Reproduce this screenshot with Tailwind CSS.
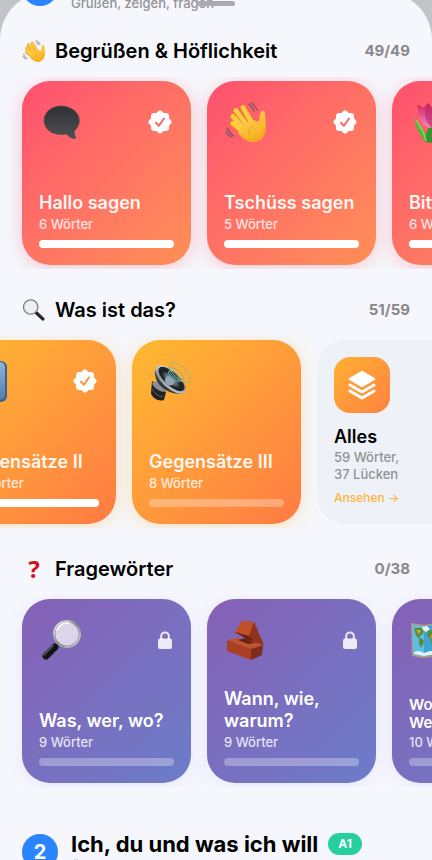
<!DOCTYPE html>
<html lang="de">

<head>
    <meta charset="UTF-8">
    <meta name="viewport" content="width=device-width, initial-scale=1.0">
    <title>Lektionen</title>
    <script src="https://cdn.jsdelivr.net/npm/@tailwindcss/browser@4"></script>
</head>

<body class="bg-[#c3c4c9] font-['Inter',sans-serif] text-black">
    <!-- Shared icons -->
    <svg class="absolute w-0 h-0" aria-hidden="true">
        <defs>
            <linearGradient id="skin" x1="0" y1="0" x2="0.6" y2="1">
                <stop offset="0" stop-color="#ffd75a" />
                <stop offset="1" stop-color="#f9ae1f" />
            </linearGradient>
            <linearGradient id="balloon" x1="0" y1="0" x2="0" y2="1">
                <stop offset="0" stop-color="#303032" />
                <stop offset="1" stop-color="#505052" />
            </linearGradient>
            <linearGradient id="petal" x1="0" y1="0" x2="0" y2="1">
                <stop offset="0" stop-color="#d51f5e" />
                <stop offset="1" stop-color="#f08cc0" />
            </linearGradient>
            <linearGradient id="tile" x1="0" y1="0" x2="0" y2="1">
                <stop offset="0" stop-color="#8fb4dc" />
                <stop offset="1" stop-color="#4f7fae" />
            </linearGradient>
            <linearGradient id="metal" x1="0" y1="0" x2="1" y2="1">
                <stop offset="0" stop-color="#f2f3f5" />
                <stop offset="0.5" stop-color="#8d9299" />
                <stop offset="1" stop-color="#d5d8dc" />
            </linearGradient>
            <radialGradient id="cone" cx="0.5" cy="0.55" r="0.6">
                <stop offset="0" stop-color="#b5c0cd" />
                <stop offset="0.35" stop-color="#5d666f" />
                <stop offset="0.6" stop-color="#1b1e22" />
                <stop offset="1" stop-color="#2d3237" />
            </radialGradient>
        </defs>
        <symbol id="wave" viewBox="0 0 44 44">
            <g fill="none" stroke-linecap="round">
                <g stroke="#dd8f16" stroke-width="6">
                    <path d="M29 25 19 8M25 28 12 11M22 31 9 17M22 34 9 24" />
                </g>
                <g stroke="#ffcb45" stroke-width="4.6">
                    <path d="M29 25 19 7.500M25 28 12 10.500M22 31 9 16.500M22 34 9 23.500" />
                </g>
            </g>
            <path d="M30 20c2 1 4 2 5 1 1-3 0-6 2-9 1-2 4-1.500 4 1 0 4 1 9 1 14 0 8-5 15-13 15-6 0-11-4-15-9l6-9z" fill="url(#skin)" />
            <path d="M29 25c-3 2-5 6-4 10" fill="none" stroke="#e39a1b" stroke-width="0.800" />
            <path d="M17 34c4 5 10 7 15 5 5-1 8-6 9-11" fill="none" stroke="#ea9915" stroke-width="1" opacity=".6" />
            <path d="M25 4c2 2 4 4 5 7M28 3c2 2 4 4 5 7M3 28c1 3 3 5 6 8M2 32c1 2 3 4 5 5" fill="none" stroke="#6d5a62" stroke-width="1.300" stroke-linecap="round" />
        </symbol>
        <symbol id="speech" viewBox="0 0 44 44">
            <path d="M22 6C12 6 5 12.500 5 20.500S12 34.500 22 34.500c2.500 0 4 0 5.500-.500 2 2.600 5 4.600 8.500 4.600.8 0 1-.8.6-1.400-1-2-1.300-4-1.200-6.200 3-3 5-6.500 5-10.500C40.400 12.500 32 6 22 6z" fill="url(#balloon)" stroke="#5a5052" stroke-width=".7" />
        </symbol>
        <symbol id="tulip" viewBox="0 0 44 44">
            <path d="M6 19c4 4 10 10 13 23h-3C12 36 6 28 6 19z" fill="#55b63c" />
            <path d="M16 42c0-7 2-12 5-17l3 1-1 17z" fill="#3a9431" />
            <path d="M7 20c4 6 8 12 10 21" fill="none" stroke="#b4e27d" stroke-width="1" />
            <path d="M23 28c9-1 9-12 12-22-5 0-8 2-10 5-2-4-4-5-6-8-2 3-4 3-5 5-2-2-4-3-6-3 3 8 0 21 15 23z" fill="url(#petal)" />
            <path d="M19 3c-4 7-5 17 4 25 5-8 3-18-4-25z" fill="#b52665" opacity=".6" />
            <path d="M38 18c-6 7-10 15-12 25h3c6-8 9-15 9-25z" fill="#55b63c" />
        </symbol>
        <symbol id="bluetile" viewBox="0 0 44 44">
            <rect x="1" y="2" width="42" height="41" rx="6" fill="#3f6185" />
            <rect x="2" y="3" width="39" height="38" rx="5" fill="url(#tile)" />
            <path d="M22 10v22M14 18l8-8 8 8" fill="none" stroke="#fff" stroke-width="4" />
        </symbol>
        <symbol id="speaker" viewBox="0 0 44 44">
            <path d="M3 22 17 33 15 41C10 43 3 39 2 34z" fill="#202326" />
            <path d="M3 24c1 4 6 8 12 9l2-3-9-8z" fill="#8a8f95" />
            <path d="M3 30c2 4 6 7 11 8" fill="none" stroke="#5c6268" stroke-width="1" />
            <path d="M6 11c-1 7 3 15 9 19 6 4 14 6 20 4z" fill="#34393e" />
            <ellipse cx="21.500" cy="20.500" rx="19" ry="8.500" transform="rotate(42 21.500 20.500)" fill="url(#metal)" />
            <ellipse cx="22.500" cy="20" rx="16.500" ry="6.800" transform="rotate(42 22.500 20)" fill="url(#cone)" />
            <ellipse cx="20.500" cy="22" rx="5" ry="4" transform="rotate(42 20.500 22)" fill="#98a5b5" />
            <g fill="none">
                <ellipse cx="25" cy="17" rx="7" ry="3" transform="rotate(43 25 17)" stroke="#43a9be" stroke-width="1" />
                <ellipse cx="27.500" cy="15.500" rx="9" ry="4" transform="rotate(43 27.500 15.500)" stroke="#5fb5af" stroke-width=".8" />
                <ellipse cx="31" cy="13.500" rx="13.500" ry="6" transform="rotate(43 31 13.500)" stroke="#a5b976" stroke-width="1" />
            </g>
        </symbol>
        <symbol id="magnifier" viewBox="0 0 44 44">
            <path d="M19 25 15 29" stroke="#a9adb3" stroke-width="4" />
            <path d="M16 29 7 38" stroke="#131616" stroke-width="7" stroke-linecap="round" />
            <path d="M14 27.500 5 37" stroke="#59605d" stroke-width="1.500" stroke-linecap="round" />
            <circle cx="28" cy="16" r="13" fill="#dcd5eb" stroke="#5f6576" stroke-width="2.500" />
            <circle cx="28" cy="16" r="13" fill="none" stroke="url(#metal)" stroke-width="2" />
            <path d="M18 12c2-5 7-8 12-7" fill="none" stroke="#fff" stroke-width="1.500" stroke-linecap="round" />
        </symbol>
        <symbol id="magnifier-left" viewBox="0 0 24 24">
            <path d="M14.500 15 21 21" stroke="#24272a" stroke-width="3.200" stroke-linecap="round" />
            <path d="M16.500 15 22 20" stroke="#777b80" stroke-width=".8" stroke-linecap="round" />
            <circle cx="8.700" cy="9" r="7.200" fill="#eef0f3" stroke="#6c7074" stroke-width="1.200" />
            <circle cx="8.700" cy="9" r="6.400" fill="none" stroke="#c5c8cc" stroke-width=".8" />
        </symbol>
        <symbol id="brick" viewBox="0 0 44 44">
            <path d="M11 15 18 3 29 4 40 27 31 26 22 19z" fill="#a33f20" />
            <path d="M11 14 18 3 30 4 25 18z" fill="#c04f2a" />
            <path d="M30 4 40 27 30 23 25 18z" fill="#8f351b" />
            <path d="M3 22 14 20 39 27 27 31z" fill="#c2542e" />
            <path d="M3 22 27 31 27 42 3 33z" fill="#a94022" />
            <path d="M27 31 39 27 38 37 27 42z" fill="#7e2e18" />
            <path d="M14 22 21 20 31 25 24 26z" fill="#6d2412" />
            <path d="M11 14 25 18 30 23 24 22z" fill="#6b2412" />
        </symbol>
        <symbol id="map" viewBox="0 0 44 44">
            <path d="M2 5 15 7 29 5 42 7 42 40 29 38 15 40 3 38z" fill="#b39b85" />
            <path d="M3.500 7 15 8.500 15 38.500 4.500 36.500z" fill="#5abfe9" />
            <path d="M15 8.500 29 6.500 29 36.500 15 38.500z" fill="#3ea4d6" />
            <path d="M29 6.500 40.500 8.500 40.500 38.500 29 36.500z" fill="#5abfe9" />
            <path d="M5 11c3-2 7-1 10 0l-1 5-3 2-1 3-3-4zM10 20c3 0 5 2 5 4l-3 6-2-4zM19 13l7-2 3 3-3 4 1 6-4 3-2-7-3-2z" fill="#5d8c32" />
            <path d="M7 12l5 0-2 4zM21 17l4 1-1 5z" fill="#c2b041" />
            <path d="M13 9l5-1 3 3-4 3-3-2zM5 34l5-1 5 2 6-2 8 1v2l-14 2-10-2z" fill="#e8f3f5" />
        </symbol>
        <symbol id="seal" viewBox="0 0 24 24">
            <rect x="3" y="3" width="18" height="18" rx="3" fill="#fff" />
            <rect x="3" y="3" width="18" height="18" rx="3" fill="#fff" transform="rotate(45 12 12)" />
            <path d="M8 12.800 10.800 15.800 16 8.500" fill="none" stroke="currentColor" stroke-width="2" stroke-linecap="round" stroke-linejoin="round" />
        </symbol>
        <symbol id="lock" viewBox="0 0 14 18">
            <path d="M3.200 9V5.200a3.800 3.800 0 0 1 7.600 0V9" fill="none" stroke="currentColor" stroke-width="2" />
            <rect x="0" y="7.500" width="14" height="10.500" rx="2" fill="currentColor" />
        </symbol>
    </svg>

    <main class="relative -mt-2 h-[calc(100vh+8px)] overflow-hidden rounded-t-[48px] bg-[#f6f7fc]">
        <div class="absolute top-[9px] left-1/2 z-10 h-[5px] w-[38px] -translate-x-1/2 rounded-full bg-[#aaabb2]"></div>

        <div class="-mt-6">
            <header class="flex items-start gap-[13px] px-[22px]">
                <span class="mt-0.5 flex size-9 shrink-0 items-center justify-center rounded-full bg-[#2a84ff] text-xl font-bold text-white">1</span>
                <div>
                    <h1 class="text-[22px] leading-6 font-bold">Hallo!</h1>
                    <p class="text-[13px] leading-[22px] font-medium text-[#929297]">Grüßen, zeigen, fragen</p>
                </div>
            </header>

            <div class="mt-[23px] flex flex-col gap-[27px]">
                <section>
                    <div class="flex items-center gap-[9px] px-[22px] leading-7">
                        <svg class="size-6"><use href="#wave" /></svg>
                        <h2 class="flex-1 text-xl leading-7 font-semibold">Begrüßen &amp; Höflichkeit</h2>
                        <span class="text-[15px] font-bold text-[#88888d]">49/49</span>
                    </div>
                    <div class="mt-3 flex gap-4 overflow-x-auto px-[22px] py-1 [scrollbar-width:none]">
                        <button class="flex h-[184px] w-[169px] shrink-0 flex-col rounded-[28px] bg-linear-135 from-[#ff4f6f] to-[#ff8f55] p-[17px] text-left text-white shadow-[0_3px_18px_#ff5a704d]">
                            <span class="flex h-12 w-full items-center justify-between">
                                <svg class="size-11"><use href="#speech" /></svg>
                                <svg class="mr-0.5 size-6 text-[#ff6a63]"><use href="#seal" /></svg>
                            </span>
                            <span class="mt-auto text-lg leading-[22px] font-semibold text-white/95">Hallo sagen</span>
                            <span class="text-[13px] leading-5 font-medium text-white/80">6 Wörter</span>
                            <span class="mt-1.5 h-2 w-full rounded-full bg-white"></span>
                        </button>
                        <button class="flex h-[184px] w-[169px] shrink-0 flex-col rounded-[28px] bg-linear-135 from-[#ff4f6f] to-[#ff8f55] p-[17px] text-left text-white shadow-[0_3px_18px_#ff5a704d]">
                            <span class="flex h-12 w-full items-center justify-between">
                                <svg class="size-11"><use href="#wave" /></svg>
                                <svg class="mr-0.5 size-6 text-[#ff6a63]"><use href="#seal" /></svg>
                            </span>
                            <span class="mt-auto text-lg leading-[22px] font-semibold text-white/95">Tschüss sagen</span>
                            <span class="text-[13px] leading-5 font-medium text-white/80">5 Wörter</span>
                            <span class="mt-1.5 h-2 w-full rounded-full bg-white"></span>
                        </button>
                        <button class="flex h-[184px] w-[169px] shrink-0 flex-col rounded-[28px] bg-linear-135 from-[#ff4f6f] to-[#ff8f55] p-[17px] text-left text-white shadow-[0_3px_18px_#ff5a704d]">
                            <span class="flex h-12 w-full items-center justify-between">
                                <svg class="size-11"><use href="#tulip" /></svg>
                                <svg class="mr-0.5 size-6 text-[#ff6a63]"><use href="#seal" /></svg>
                            </span>
                            <span class="mt-auto text-lg leading-[22px] font-semibold text-white/95">Bitte, danke</span>
                            <span class="text-[13px] leading-5 font-medium text-white/80">6 Wörter</span>
                            <span class="mt-1.5 h-2 w-full rounded-full bg-white"></span>
                        </button>
                    </div>
                </section>

                <section>
                    <div class="flex items-center gap-[9px] px-[22px] leading-7">
                        <svg class="size-6"><use href="#magnifier-left" /></svg>
                        <h2 class="flex-1 text-xl leading-7 font-semibold">Was ist das?</h2>
                        <span class="text-[15px] font-bold text-[#88888d]">51/59</span>
                    </div>
                    <div class="mt-3 flex gap-4 overflow-x-auto px-[22px] py-1 [scrollbar-width:none]">
                        <!-- first card is already swiped half out of view -->
                        <button class="-ml-[75px] flex h-[184px] w-[169px] shrink-0 flex-col rounded-[28px] bg-linear-135 from-[#ffb92f] to-[#ff7a42] p-[17px] text-left text-white shadow-[0_3px_18px_#ffb4304d]">
                            <span class="flex h-12 w-full items-center justify-between">
                                <svg class="size-11"><use href="#bluetile" /></svg>
                                <svg class="mr-0.5 size-6 text-[#ff963a]"><use href="#seal" /></svg>
                            </span>
                            <span class="mt-auto text-lg leading-[22px] font-semibold text-white/95">Gegensätze II</span>
                            <span class="text-[13px] leading-5 font-medium text-white/80">10 Wörter</span>
                            <span class="mt-1.5 h-2 w-full rounded-full bg-white"></span>
                        </button>
                        <button class="flex h-[184px] w-[169px] shrink-0 flex-col rounded-[28px] bg-linear-135 from-[#ffb92f] to-[#ff7a42] p-[17px] text-left text-white shadow-[0_3px_18px_#ffb4304d]">
                            <span class="flex h-12 w-full items-center justify-between">
                                <svg class="size-11"><use href="#speaker" /></svg>
                            </span>
                            <span class="mt-auto text-lg leading-[22px] font-semibold text-white/95">Gegensätze III</span>
                            <span class="text-[13px] leading-5 font-medium text-white/80">8 Wörter</span>
                            <span class="mt-1.5 h-2 w-full rounded-full bg-white/30"></span>
                        </button>
                        <button class="flex h-[184px] w-[169px] shrink-0 flex-col rounded-[28px] bg-[#eff1f8] p-[17px] text-left">
                            <span class="flex size-14 shrink-0 items-center justify-center rounded-2xl bg-linear-135 from-[#ffb030] to-[#ff8040]">
                                <svg class="size-8" viewBox="0 0 32 32" fill="#fff" stroke="#fff" stroke-linejoin="round" stroke-linecap="round">
                                    <path d="M16 3 28 10 16 17 4 10z" stroke-width="2.500" />
                                    <path d="M4 16 16 23 28 16M4 22 16 29 28 22" fill="none" stroke-width="3" />
                                </svg>
                            </span>
                            <span class="mt-3 text-lg leading-6 font-semibold">Alles</span>
                            <span class="text-[13px] leading-[17px] font-medium text-[#929297]">59 Wörter,<br>37 Lücken</span>
                            <span class="mt-1.5 text-xs leading-[18px] font-medium text-[#ffb53c]">Ansehen →</span>
                        </button>
                    </div>
                </section>

                <section>
                    <div class="flex items-center gap-[9px] px-[22px] leading-7">
                        <span class="w-6 text-center font-['Noto_Sans',sans-serif] text-2xl leading-7 font-bold text-[#d4101a]">?</span>
                        <h2 class="flex-1 text-xl leading-7 font-semibold">Fragewörter</h2>
                        <span class="text-[15px] font-bold text-[#88888d]">0/38</span>
                    </div>
                    <div class="mt-3 flex gap-4 overflow-x-auto px-[22px] py-1 [scrollbar-width:none]">
                        <button class="flex h-[184px] w-[169px] shrink-0 flex-col rounded-[28px] bg-linear-135 from-[#8560b6] to-[#6b7dc9] p-[17px] text-left text-white shadow-[0_3px_18px_#8a80ff20]">
                            <span class="flex h-12 w-full items-center justify-between">
                                <svg class="size-11"><use href="#magnifier" /></svg>
                                <svg class="mr-0.5 h-[18px] w-3.5 text-white/85"><use href="#lock" /></svg>
                            </span>
                            <span class="mt-auto text-lg leading-[22px] font-semibold">Was, wer, wo?</span>
                            <span class="text-[13px] leading-5 font-medium text-white/80">9 Wörter</span>
                            <span class="mt-1.5 h-2 w-full rounded-full bg-white/30"></span>
                        </button>
                        <button class="flex h-[184px] w-[169px] shrink-0 flex-col rounded-[28px] bg-linear-135 from-[#8560b6] to-[#6b7dc9] p-[17px] text-left text-white shadow-[0_3px_18px_#8a80ff20]">
                            <span class="flex h-12 w-full items-center justify-between">
                                <svg class="size-11"><use href="#brick" /></svg>
                                <svg class="mr-0.5 h-[18px] w-3.5 text-white/85"><use href="#lock" /></svg>
                            </span>
                            <span class="mt-auto text-lg leading-[22px] font-semibold">Wann, wie,<br>warum?</span>
                            <span class="text-[13px] leading-5 font-medium text-white/80">9 Wörter</span>
                            <span class="mt-1.5 h-2 w-full rounded-full bg-white/30"></span>
                        </button>
                        <button class="flex h-[184px] w-[169px] shrink-0 flex-col rounded-[28px] bg-linear-135 from-[#8560b6] to-[#6b7dc9] p-[17px] text-left text-white shadow-[0_3px_18px_#8a80ff20]">
                            <span class="flex h-12 w-full items-center justify-between">
                                <svg class="size-11"><use href="#map" /></svg>
                                <svg class="mr-0.5 h-[18px] w-3.5 text-white/85"><use href="#lock" /></svg>
                            </span>
                            <span class="mt-auto text-[15px] leading-[18px] font-semibold">Woher, wohin?<br>Welche?</span>
                            <span class="text-[13px] leading-5 font-medium text-white/80">10 Wörter</span>
                            <span class="mt-1.5 h-2 w-full rounded-full bg-white/30"></span>
                        </button>
                    </div>
                </section>
            </div>

            <header class="mt-[45px] flex items-start gap-[13px] px-[22px]">
                <span class="mt-0.5 flex size-9 shrink-0 items-center justify-center rounded-full bg-[#2a84ff] text-xl font-bold text-white">2</span>
                <div>
                    <div class="flex items-center gap-2.5">
                        <h1 class="text-[22px] leading-6 font-bold">Ich, du und was ich will</h1>
                        <span class="rounded-full bg-[#26cf9e] px-2.5 text-xs leading-[22px] font-bold text-white">A1</span>
                    </div>
                    <p class="text-[13px] leading-[22px] font-medium text-[#929297]">Über mich sprechen</p>
                </div>
            </header>
        </div>
    </main>
</body>

</html>
